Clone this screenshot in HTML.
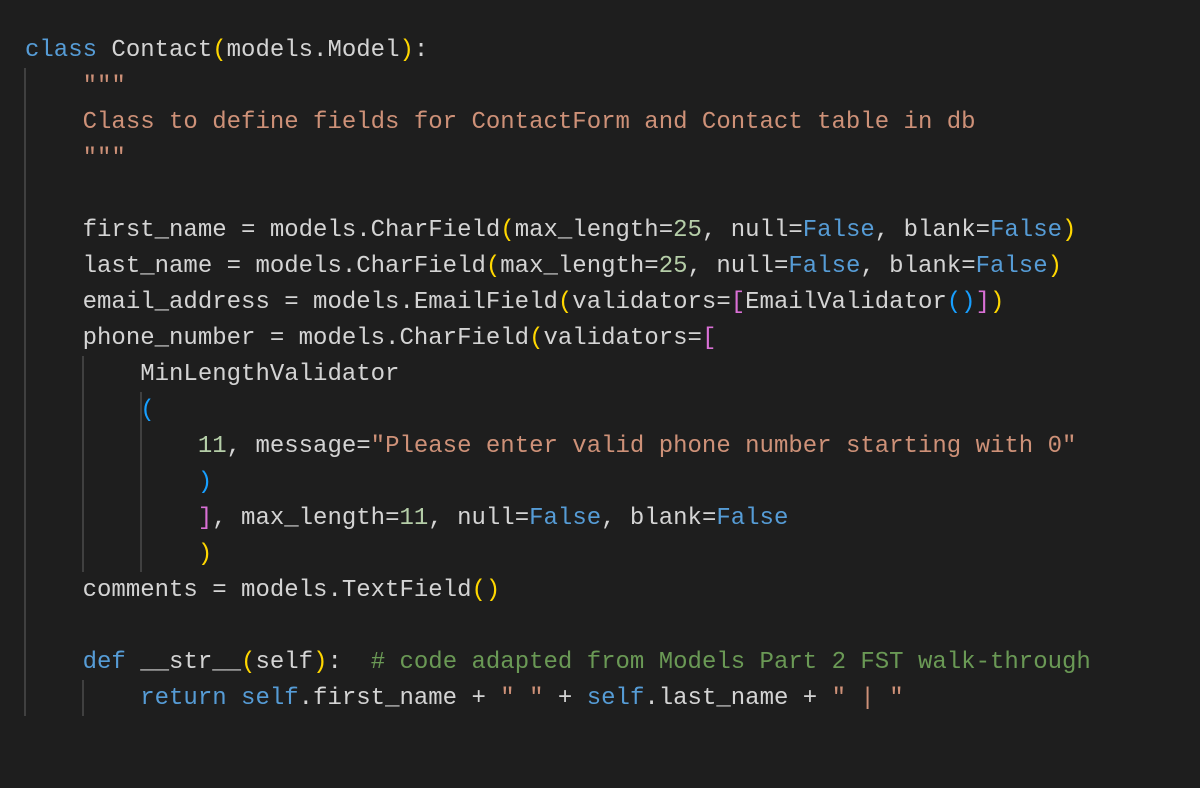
<!DOCTYPE html>
<html><head><meta charset="utf-8"><style>
html,body{margin:0;padding:0;background:#1e1e1e;width:1200px;height:788px;overflow:hidden}
pre{position:absolute;left:25px;top:33px;margin:0;font-family:"Liberation Mono",monospace;font-size:24px;line-height:36px;color:#d4d4d4;white-space:pre}
.k{color:#569cd6}.s{color:#ce9178}.n{color:#b5cea8}.c{color:#6a9955}.y{color:#ffd700}.m{color:#da70d6}.b{color:#179fff}
.g{position:absolute;width:2px;background:#404040}
</style></head><body>
<div class="g" style="left:24px;top:68px;height:648px"></div>
<div class="g" style="left:82px;top:356px;height:216px"></div>
<div class="g" style="left:82px;top:680px;height:36px"></div>
<div class="g" style="left:140px;top:392px;height:180px"></div>
<pre><span class="k">class</span> Contact<span class="y">(</span>models.Model<span class="y">)</span>:
    <span class="s">"""</span>
    <span class="s">Class to define fields for ContactForm and Contact table in db</span>
    <span class="s">"""</span>

    first_name = models.CharField<span class="y">(</span>max_length=<span class="n">25</span>, null=<span class="k">False</span>, blank=<span class="k">False</span><span class="y">)</span>
    last_name = models.CharField<span class="y">(</span>max_length=<span class="n">25</span>, null=<span class="k">False</span>, blank=<span class="k">False</span><span class="y">)</span>
    email_address = models.EmailField<span class="y">(</span>validators=<span class="m">[</span>EmailValidator<span class="b">()</span><span class="m">]</span><span class="y">)</span>
    phone_number = models.CharField<span class="y">(</span>validators=<span class="m">[</span>
        MinLengthValidator
        <span class="b">(</span>
            <span class="n">11</span>, message=<span class="s">"Please enter valid phone number starting with 0"</span>
            <span class="b">)</span>
            <span class="m">]</span>, max_length=<span class="n">11</span>, null=<span class="k">False</span>, blank=<span class="k">False</span>
            <span class="y">)</span>
    comments = models.TextField<span class="y">()</span>

    <span class="k">def</span> __str__<span class="y">(</span>self<span class="y">)</span>:  <span class="c"># code adapted from Models Part 2 FST walk-through</span>
        <span class="k">return</span> <span class="k">self</span>.first_name + <span class="s">" "</span> + <span class="k">self</span>.last_name + <span class="s">" | "</span></pre>
</body></html>
